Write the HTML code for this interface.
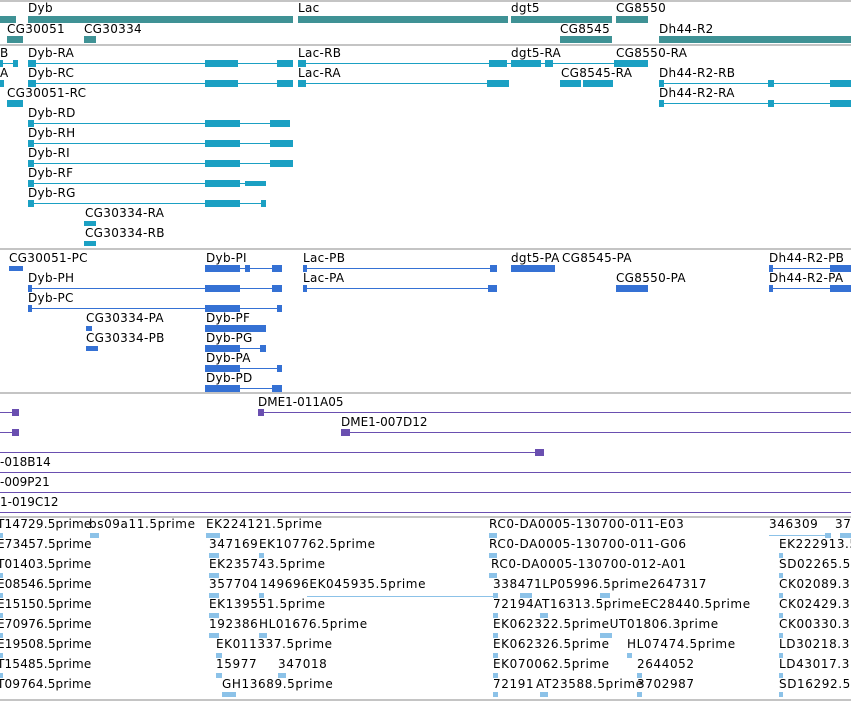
<!DOCTYPE html>
<html><head><meta charset="utf-8"><style>
body{margin:0;width:851px;height:701px;background:#fff;position:relative;overflow:hidden}
.t{position:absolute;font:12px "DejaVu Sans","Liberation Sans",sans-serif;white-space:nowrap;line-height:13px;color:#000;letter-spacing:0.3px}
.w{letter-spacing:0.6px}
.lc{left:-3px;letter-spacing:0.2px}
.pl{font-size:12px;letter-spacing:0}
i{position:absolute;display:block}
.s{background:#c4c4c4;height:2px;left:0;width:851px}
.g{background:#3f9295;height:7px}
.c{background:#1ba0c3}
.p{background:#3571d4}
.v{background:#6a4fb0}
.e{background:#8cc2e8}
.l{height:1px}
.x{height:7px}
</style></head><body>
<i class="s" style="top:0"></i><i class="s" style="top:44px"></i><i class="s" style="top:248px"></i><i class="s" style="top:392px"></i><i class="s" style="top:516px"></i><i class="s" style="top:699px"></i>

<!-- genes -->
<div class="t" style="left:28px;top:2px">Dyb</div><div class="t" style="left:298px;top:2px">Lac</div><div class="t" style="left:511px;top:2px">dgt5</div><div class="t" style="left:616px;top:2px">CG8550</div>
<i class="g" style="left:0;top:16px;width:16px"></i><i class="g" style="left:28px;top:16px;width:265px"></i><i class="g" style="left:298px;top:16px;width:210px"></i><i class="g" style="left:511px;top:16px;width:101px"></i><i class="g" style="left:616px;top:16px;width:32px"></i>
<div class="t" style="left:7px;top:23px">CG30051</div><div class="t" style="left:84px;top:23px">CG30334</div><div class="t" style="left:560px;top:23px">CG8545</div><div class="t" style="left:659px;top:23px">Dh44-R2</div>
<i class="g" style="left:7px;top:36px;width:16px"></i><i class="g" style="left:84px;top:36px;width:12px"></i><i class="g" style="left:560px;top:36px;width:52px"></i><i class="g" style="left:659px;top:36px;width:192px"></i>

<!-- transcripts -->
<div class="t" style="left:0;top:47px">B</div><div class="t" style="left:28px;top:47px">Dyb-RA</div><div class="t" style="left:298px;top:47px">Lac-RB</div><div class="t" style="left:511px;top:47px">dgt5-RA</div><div class="t" style="left:616px;top:47px">CG8550-RA</div>
<i class="c l" style="left:0;top:63px;width:18px"></i><i class="c x" style="left:0;top:60px;width:3px"></i><i class="c x" style="left:13px;top:60px;width:5px"></i>
<i class="c l" style="left:28px;top:63px;width:265px"></i><i class="c x" style="left:28px;top:60px;width:8px"></i><i class="c x" style="left:205px;top:60px;width:33px"></i><i class="c x" style="left:277px;top:60px;width:16px"></i>
<i class="c l" style="left:298px;top:63px;width:350px"></i><i class="c x" style="left:298px;top:60px;width:8px"></i><i class="c x" style="left:489px;top:60px;width:18px"></i><i class="c x" style="left:511px;top:60px;width:30px"></i><i class="c x" style="left:545px;top:60px;width:8px"></i><i class="c x" style="left:614px;top:60px;width:34px"></i>
<div class="t" style="left:0;top:67px">A</div><div class="t" style="left:28px;top:67px">Dyb-RC</div><div class="t" style="left:298px;top:67px">Lac-RA</div><div class="t" style="left:561px;top:67px">CG8545-RA</div><div class="t" style="left:659px;top:67px">Dh44-R2-RB</div>
<i class="c x" style="left:0;top:80px;width:4px"></i>
<i class="c l" style="left:28px;top:83px;width:265px"></i><i class="c x" style="left:28px;top:80px;width:8px"></i><i class="c x" style="left:205px;top:80px;width:33px"></i><i class="c x" style="left:277px;top:80px;width:16px"></i>
<i class="c l" style="left:298px;top:83px;width:211px"></i><i class="c x" style="left:298px;top:80px;width:8px"></i><i class="c x" style="left:487px;top:80px;width:22px"></i>
<i class="c x" style="left:560px;top:80px;width:21px"></i><i class="c x" style="left:583px;top:80px;width:30px"></i>
<i class="c l" style="left:659px;top:83px;width:192px"></i><i class="c x" style="left:659px;top:80px;width:5px"></i><i class="c x" style="left:768px;top:80px;width:6px"></i><i class="c x" style="left:830px;top:80px;width:21px"></i>
<div class="t" style="left:7px;top:87px">CG30051-RC</div><div class="t" style="left:659px;top:87px">Dh44-R2-RA</div>
<i class="c x" style="left:7px;top:100px;width:16px"></i>
<i class="c l" style="left:659px;top:103px;width:192px"></i><i class="c x" style="left:659px;top:100px;width:5px"></i><i class="c x" style="left:768px;top:100px;width:6px"></i><i class="c x" style="left:830px;top:100px;width:21px"></i>
<div class="t" style="left:28px;top:107px">Dyb-RD</div><div class="t" style="left:28px;top:127px">Dyb-RH</div><div class="t" style="left:28px;top:147px">Dyb-RI</div><div class="t" style="left:28px;top:167px">Dyb-RF</div><div class="t" style="left:28px;top:187px">Dyb-RG</div>
<i class="c l" style="left:28px;top:123px;width:262px"></i><i class="c x" style="left:28px;top:120px;width:6px"></i><i class="c x" style="left:205px;top:120px;width:35px"></i><i class="c x" style="left:270px;top:120px;width:20px"></i>
<i class="c l" style="left:28px;top:143px;width:265px"></i><i class="c x" style="left:28px;top:140px;width:6px"></i><i class="c x" style="left:205px;top:140px;width:35px"></i><i class="c x" style="left:270px;top:140px;width:23px"></i>
<i class="c l" style="left:28px;top:163px;width:265px"></i><i class="c x" style="left:28px;top:160px;width:6px"></i><i class="c x" style="left:205px;top:160px;width:35px"></i><i class="c x" style="left:270px;top:160px;width:23px"></i>
<i class="c l" style="left:28px;top:183px;width:238px"></i><i class="c x" style="left:28px;top:180px;width:6px"></i><i class="c x" style="left:205px;top:180px;width:35px"></i><i class="c x" style="left:245px;top:181px;width:21px;height:5px"></i>
<i class="c l" style="left:28px;top:203px;width:238px"></i><i class="c x" style="left:28px;top:200px;width:6px"></i><i class="c x" style="left:205px;top:200px;width:35px"></i><i class="c x" style="left:261px;top:200px;width:5px"></i>
<div class="t" style="left:85px;top:207px">CG30334-RA</div><div class="t" style="left:85px;top:227px">CG30334-RB</div>
<i class="c x" style="left:84px;top:221px;width:12px;height:5px"></i><i class="c x" style="left:84px;top:241px;width:12px;height:5px"></i>

<!-- proteins -->
<div class="t" style="left:9px;top:252px">CG30051-PC</div><div class="t" style="left:206px;top:252px">Dyb-PI</div><div class="t" style="left:303px;top:252px">Lac-PB</div><div class="t" style="left:511px;top:252px">dgt5-PA</div><div class="t" style="left:562px;top:252px">CG8545-PA</div><div class="t" style="left:769px;top:252px">Dh44-R2-PB</div>
<i class="p x" style="left:9px;top:266px;width:14px;height:5px"></i>
<i class="p l" style="left:205px;top:268px;width:77px"></i><i class="p x" style="left:205px;top:265px;width:35px"></i><i class="p x" style="left:245px;top:265px;width:5px"></i><i class="p x" style="left:272px;top:265px;width:10px"></i>
<i class="p l" style="left:303px;top:268px;width:194px"></i><i class="p x" style="left:303px;top:265px;width:4px"></i><i class="p x" style="left:490px;top:265px;width:7px"></i>
<i class="p x" style="left:511px;top:265px;width:44px"></i>
<i class="p l" style="left:769px;top:268px;width:82px"></i><i class="p x" style="left:769px;top:265px;width:4px"></i><i class="p x" style="left:830px;top:265px;width:21px"></i>
<div class="t" style="left:28px;top:272px">Dyb-PH</div><div class="t" style="left:303px;top:272px">Lac-PA</div><div class="t" style="left:616px;top:272px">CG8550-PA</div><div class="t" style="left:769px;top:272px">Dh44-R2-PA</div>
<i class="p l" style="left:28px;top:288px;width:254px"></i><i class="p x" style="left:28px;top:285px;width:4px"></i><i class="p x" style="left:205px;top:285px;width:35px"></i><i class="p x" style="left:272px;top:285px;width:10px"></i>
<i class="p l" style="left:303px;top:288px;width:194px"></i><i class="p x" style="left:303px;top:285px;width:4px"></i><i class="p x" style="left:488px;top:285px;width:9px"></i>
<i class="p x" style="left:616px;top:285px;width:32px"></i>
<i class="p l" style="left:769px;top:288px;width:82px"></i><i class="p x" style="left:769px;top:285px;width:4px"></i><i class="p x" style="left:830px;top:285px;width:21px"></i>
<div class="t" style="left:28px;top:292px">Dyb-PC</div>
<i class="p l" style="left:28px;top:308px;width:254px"></i><i class="p x" style="left:28px;top:305px;width:4px"></i><i class="p x" style="left:205px;top:305px;width:35px"></i><i class="p x" style="left:277px;top:305px;width:5px"></i>
<div class="t" style="left:86px;top:312px">CG30334-PA</div><div class="t" style="left:206px;top:312px">Dyb-PF</div>
<i class="p x" style="left:86px;top:326px;width:6px;height:5px"></i><i class="p x" style="left:205px;top:325px;width:61px"></i>
<div class="t" style="left:86px;top:332px">CG30334-PB</div><div class="t" style="left:206px;top:332px">Dyb-PG</div>
<i class="p x" style="left:86px;top:346px;width:12px;height:5px"></i><i class="p l" style="left:205px;top:348px;width:61px"></i><i class="p x" style="left:205px;top:345px;width:35px"></i><i class="p x" style="left:260px;top:345px;width:6px"></i>
<div class="t" style="left:206px;top:352px">Dyb-PA</div>
<i class="p l" style="left:205px;top:368px;width:77px"></i><i class="p x" style="left:205px;top:365px;width:35px"></i><i class="p x" style="left:277px;top:365px;width:5px"></i>
<div class="t" style="left:206px;top:372px">Dyb-PD</div>
<i class="p l" style="left:205px;top:388px;width:77px"></i><i class="p x" style="left:205px;top:385px;width:35px"></i><i class="p x" style="left:272px;top:385px;width:10px"></i>

<!-- clones -->
<div class="t pl" style="left:258px;top:396px">DME1-011A05</div>
<i class="v l" style="left:0;top:412px;width:18px"></i><i class="v x" style="left:12px;top:409px;width:7px"></i>
<i class="v l" style="left:258px;top:412px;width:593px"></i><i class="v x" style="left:258px;top:409px;width:6px"></i>
<div class="t pl" style="left:341px;top:416px">DME1-007D12</div>
<i class="v l" style="left:0;top:432px;width:18px"></i><i class="v x" style="left:12px;top:429px;width:7px"></i>
<i class="v l" style="left:341px;top:432px;width:510px"></i><i class="v x" style="left:341px;top:429px;width:9px"></i>
<i class="v l" style="left:0;top:452px;width:544px"></i><i class="v x" style="left:535px;top:449px;width:9px"></i>
<div class="t pl" style="left:0;top:456px">-018B14</div><i class="v l" style="left:0;top:472px;width:851px"></i>
<div class="t pl" style="left:0;top:476px">-009P21</div><i class="v l" style="left:0;top:492px;width:851px"></i>
<div class="t pl" style="left:0;top:496px">1-019C12</div><i class="v l" style="left:0;top:512px;width:851px"></i>

<!-- ESTs -->
<div class="t lc" style="top:518px">T14729.5prime</div><div class="t w" style="left:89px;top:518px">bs09a11.5prime</div><div class="t w" style="left:206px;top:518px">EK224121.5prime</div><div class="t w" style="left:489px;top:518px">RC0-DA0005-130700-011-E03</div><div class="t w" style="left:769px;top:518px">346309</div><div class="t w" style="left:835px;top:518px">37</div>
<div class="t lc" style="top:538px">E73457.5prime</div><div class="t w" style="left:209px;top:538px">347169</div><div class="t w" style="left:259px;top:538px">EK107762.5prime</div><div class="t w" style="left:489px;top:538px">RC0-DA0005-130700-011-G06</div><div class="t w" style="left:779px;top:538px">EK222913.5p</div>
<div class="t lc" style="top:558px">T01403.5prime</div><div class="t w" style="left:209px;top:558px">EK235743.5prime</div><div class="t w" style="left:491px;top:558px">RC0-DA0005-130700-012-A01</div><div class="t w" style="left:779px;top:558px">SD02265.5p</div>
<div class="t lc" style="top:578px">E08546.5prime</div><div class="t w" style="left:209px;top:578px">357704</div><div class="t w" style="left:260px;top:578px">149696EK045935.5prime</div><div class="t w" style="left:493px;top:578px">338471LP05996.5prime2647317</div><div class="t w" style="left:779px;top:578px">CK02089.3p</div>
<div class="t lc" style="top:598px">E15150.5prime</div><div class="t w" style="left:209px;top:598px">EK139551.5prime</div><div class="t w" style="left:493px;top:598px">72194AT16313.5primeEC28440.5prime</div><div class="t w" style="left:779px;top:598px">CK02429.3p</div>
<div class="t lc" style="top:618px">E70976.5prime</div><div class="t w" style="left:209px;top:618px">192386</div><div class="t w" style="left:259px;top:618px">HL01676.5prime</div><div class="t w" style="left:493px;top:618px">EK062322.5primeUT01806.3prime</div><div class="t w" style="left:779px;top:618px">CK00330.3p</div>
<div class="t lc" style="top:638px">E19508.5prime</div><div class="t w" style="left:216px;top:638px">EK011337.5prime</div><div class="t w" style="left:493px;top:638px">EK062326.5prime</div><div class="t w" style="left:627px;top:638px">HL07474.5prime</div><div class="t w" style="left:779px;top:638px">LD30218.3p</div>
<div class="t lc" style="top:658px">T15485.5prime</div><div class="t w" style="left:216px;top:658px">15977</div><div class="t w" style="left:278px;top:658px">347018</div><div class="t w" style="left:493px;top:658px">EK070062.5prime</div><div class="t w" style="left:637px;top:658px">2644052</div><div class="t w" style="left:779px;top:658px">LD43017.3p</div>
<div class="t lc" style="top:678px">T09764.5prime</div><div class="t w" style="left:222px;top:678px">GH13689.5prime</div><div class="t w" style="left:493px;top:678px">72191</div><div class="t w" style="left:536px;top:678px">AT23588.5prime</div><div class="t w" style="left:637px;top:678px">3702987</div><div class="t w" style="left:779px;top:678px">SD16292.5p</div>

<i class="e x" style="left:0;top:533px;width:3px;height:5px"></i><i class="e x" style="left:90px;top:533px;width:9px;height:5px"></i><i class="e x" style="left:206px;top:533px;width:14px;height:5px"></i><i class="e x" style="left:489px;top:533px;width:8px;height:5px"></i><i class="e l" style="left:769px;top:535px;width:62px"></i><i class="e x" style="left:825px;top:533px;width:6px;height:5px"></i><i class="e x" style="left:840px;top:533px;width:11px;height:5px"></i>
<i class="e x" style="left:209px;top:553px;width:10px;height:5px"></i><i class="e x" style="left:259px;top:553px;width:5px;height:5px"></i><i class="e x" style="left:489px;top:553px;width:8px;height:5px"></i><i class="e x" style="left:779px;top:553px;width:4px;height:5px"></i>
<i class="e x" style="left:0;top:573px;width:3px;height:5px"></i><i class="e x" style="left:209px;top:573px;width:10px;height:5px"></i><i class="e x" style="left:489px;top:573px;width:8px;height:5px"></i><i class="e x" style="left:779px;top:573px;width:4px;height:5px"></i>
<i class="e x" style="left:0;top:593px;width:3px;height:5px"></i><i class="e x" style="left:209px;top:593px;width:10px;height:5px"></i><i class="e x" style="left:259px;top:593px;width:5px;height:5px"></i><i class="e l" style="left:307px;top:596px;width:190px"></i><i class="e x" style="left:493px;top:593px;width:5px;height:5px"></i><i class="e x" style="left:520px;top:593px;width:12px;height:5px"></i><i class="e x" style="left:600px;top:593px;width:10px;height:5px"></i><i class="e x" style="left:779px;top:593px;width:4px;height:5px"></i>
<i class="e x" style="left:0;top:613px;width:3px;height:5px"></i><i class="e x" style="left:209px;top:613px;width:10px;height:5px"></i><i class="e x" style="left:493px;top:613px;width:5px;height:5px"></i><i class="e x" style="left:540px;top:613px;width:8px;height:5px"></i><i class="e x" style="left:779px;top:613px;width:4px;height:5px"></i>
<i class="e x" style="left:0;top:633px;width:3px;height:5px"></i><i class="e x" style="left:209px;top:633px;width:10px;height:5px"></i><i class="e x" style="left:259px;top:633px;width:8px;height:5px"></i><i class="e x" style="left:493px;top:633px;width:5px;height:5px"></i><i class="e x" style="left:600px;top:633px;width:12px;height:5px"></i><i class="e x" style="left:779px;top:633px;width:4px;height:5px"></i>
<i class="e x" style="left:0;top:653px;width:3px;height:5px"></i><i class="e x" style="left:216px;top:653px;width:6px;height:5px"></i><i class="e x" style="left:493px;top:653px;width:5px;height:5px"></i><i class="e x" style="left:627px;top:653px;width:5px;height:5px"></i><i class="e x" style="left:779px;top:653px;width:4px;height:5px"></i>
<i class="e x" style="left:0;top:673px;width:3px;height:5px"></i><i class="e x" style="left:216px;top:673px;width:6px;height:5px"></i><i class="e x" style="left:278px;top:673px;width:8px;height:5px"></i><i class="e x" style="left:493px;top:673px;width:5px;height:5px"></i><i class="e x" style="left:637px;top:673px;width:5px;height:5px"></i><i class="e x" style="left:779px;top:673px;width:4px;height:5px"></i>
<i class="e x" style="left:222px;top:692px;width:14px;height:5px"></i><i class="e x" style="left:493px;top:692px;width:5px;height:5px"></i><i class="e x" style="left:540px;top:692px;width:8px;height:5px"></i><i class="e x" style="left:637px;top:692px;width:5px;height:5px"></i><i class="e x" style="left:779px;top:692px;width:4px;height:5px"></i>
</body></html>
